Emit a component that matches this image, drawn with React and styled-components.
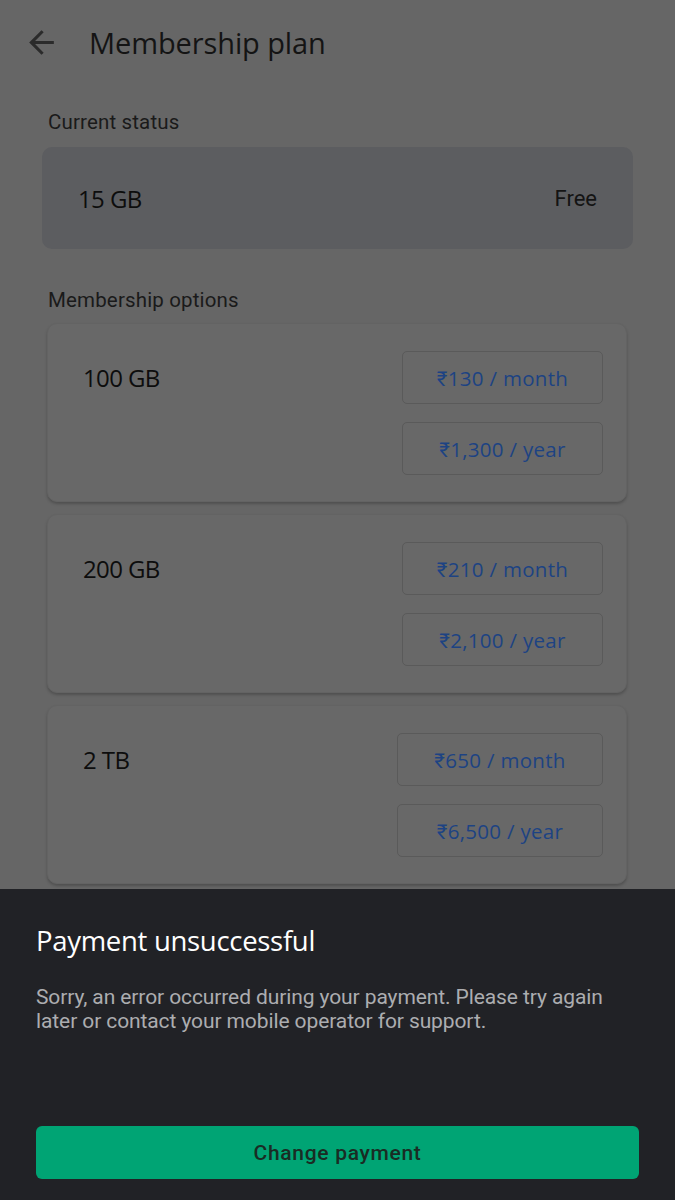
import React from "react";
import styled, { createGlobalStyle } from "styled-components";

const plans = [
  { size: "100 GB", month: "₹130 / month", year: "₹1,300 / year", width: 201 },
  { size: "200 GB", month: "₹210 / month", year: "₹2,100 / year", width: 201 },
  { size: "2 TB", month: "₹650 / month", year: "₹6,500 / year", width: 206 },
];

const BackIcon = () => (
  <svg width="37" height="37" viewBox="0 0 24 24" fill="#2b2b2b">
    <path d="M20 11H7.83l5.59-5.59L12 4l-8 8 8 8 1.41-1.41L7.83 13H20v-2z" />
  </svg>
);

const App = () => {
  return (
    <>
      <GlobalStyle />
      <StPage>
        <StHeader>
          <StBack>
            <BackIcon />
          </StBack>
          <StTitle>Membership plan</StTitle>
        </StHeader>

        <StSectionLabel $top={26}>Current status</StSectionLabel>
        <StStatusCard>
          <StPlanSize>15 GB</StPlanSize>
          <StStatusValue>Free</StStatusValue>
        </StStatusCard>

        <StSectionLabel $top={39}>Membership options</StSectionLabel>
        <StOptionList>
          {plans.map((plan) => (
            <StOptionCard key={plan.size}>
              <StOptionSize>{plan.size}</StOptionSize>
              <StPriceColumn>
                <StPriceButton $width={plan.width}>{plan.month}</StPriceButton>
                <StPriceButton $width={plan.width}>{plan.year}</StPriceButton>
              </StPriceColumn>
            </StOptionCard>
          ))}
        </StOptionList>
      </StPage>

      <StSheet>
        <StSheetTitle>Payment unsuccessful</StSheetTitle>
        <StSheetText>
          Sorry, an error occurred during your payment. Please try again
          later or contact your mobile operator for support.
        </StSheetText>
        <StSheetButton>Change payment</StSheetButton>
      </StSheet>
    </>
  );
};

export default App;

const GlobalStyle = createGlobalStyle`
  html, body {
    margin: 0;
    padding: 0;
    background: #666666;
    font-family: Roboto, "Noto Sans", sans-serif;
  }
  * { box-sizing: border-box; }
`;

const StPage = styled.div`
  display: flex;
  flex-direction: column;
  width: 675px;
  min-height: 1200px;
  padding-bottom: 40px;
`;

const StHeader = styled.header`
  display: flex;
  align-items: center;
  height: 84px;
  padding-left: 23px;
`;

const StBack = styled.div`
  display: flex;
  width: 37px;
  height: 37px;
  margin-right: 29px;
`;

const StTitle = styled.h1`
  margin: 0;
  font-family: "Open Sans", Roboto, sans-serif;
  font-size: 29px;
  font-weight: 400;
  color: #141414;
  letter-spacing: -0.1px;
`;

const StSectionLabel = styled.div`
  margin: ${(p) => p.$top}px 0 0 48px;
  font-size: 20.5px;
  line-height: 24px;
  color: #1a1a1a;
  letter-spacing: 0.15px;
`;

const StStatusCard = styled.div`
  display: flex;
  align-items: center;
  justify-content: space-between;
  margin: 13px 42px 0 42px;
  height: 102px;
  padding: 0 36px;
  background: #5c5d60;
  border-radius: 10px;
`;

const StPlanSize = styled.div`
  font-family: "Open Sans", Roboto, sans-serif;
  font-size: 24px;
  font-weight: 500;
  color: #0d0d0d;
  letter-spacing: -0.6px;
`;

const StStatusValue = styled.div`
  font-size: 22px;
  color: #141414;
`;

const StOptionList = styled.div`
  display: flex;
  flex-direction: column;
  gap: 12px;
  margin: 11px 48px 0 47px;
`;

const StOptionCard = styled.div`
  display: flex;
  justify-content: space-between;
  align-items: flex-start;
  padding: 27px 23px 26px 35px;
  background: #686868;
  border-radius: 10px;
  border: 1px solid #636363;
  box-shadow: 0 2px 3px rgba(0, 0, 0, 0.22);
`;

const StOptionSize = styled.div`
  font-family: "Open Sans", Roboto, sans-serif;
  font-size: 24px;
  font-weight: 500;
  line-height: 53px;
  color: #0d0d0d;
  letter-spacing: -0.6px;
`;

const StPriceColumn = styled.div`
  display: flex;
  flex-direction: column;
  gap: 18px;
`;

const StPriceButton = styled.button`
  height: 53px;
  width: ${(p) => p.$width}px;
  padding: 0;
  background: transparent;
  border: 1px solid #5a5a5a;
  border-radius: 5px;
  font-family: "Open Sans", Roboto, sans-serif;
  font-size: 20.5px;
  color: #1d4383;
  letter-spacing: 0.3px;
`;

const StSheet = styled.div`
  position: fixed;
  left: 0;
  right: 0;
  bottom: 0;
  height: 311px;
  display: flex;
  flex-direction: column;
  padding: 36px 36px 21px 36px;
  background: #212226;
`;

const StSheetTitle = styled.h2`
  margin: 0;
  font-family: "Open Sans", Roboto, sans-serif;
  font-size: 27.5px;
  line-height: 32px;
  font-weight: 500;
  color: #ffffff;
  letter-spacing: -0.3px;
`;

const StSheetText = styled.p`
  margin: 28px 0 0 0;
  max-width: 600px;
  font-size: 21px;
  line-height: 24px;
  color: #acadb0;
  letter-spacing: -0.1px;
`;

const StSheetButton = styled.button`
  margin-top: auto;
  width: 100%;
  height: 53px;
  border: none;
  border-radius: 6px;
  background: #00a474;
  font-family: Roboto, sans-serif;
  font-size: 21px;
  font-weight: 500;
  color: #1a2c24;
  letter-spacing: 0.7px;
`;
